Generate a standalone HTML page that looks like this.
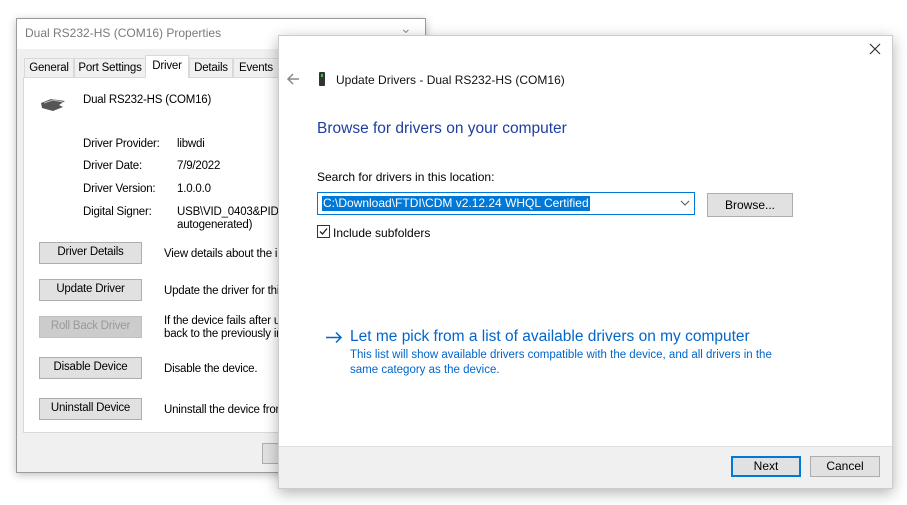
<!DOCTYPE html>
<html><head><style>
*{margin:0;padding:0;box-sizing:border-box}
body{width:907px;height:505px;background:#fff;position:relative;overflow:hidden;font-family:"Liberation Sans",sans-serif;font-size:12px;color:#000}
.a{position:absolute;white-space:nowrap}
.btn{position:absolute;background:#e1e1e1;border:1px solid #adadad;text-align:center;font-size:12px;line-height:19px}
.p{font-size:11.5px;letter-spacing:-0.2px}
</style></head><body>
<div class="a" style="left:16px;top:18px;width:410px;height:455px;background:#f0f0f0;border:1px solid #9a9a9a;box-shadow:0 2px 8px rgba(0,0,0,.25)"></div>
<div class="a" style="left:17px;top:19px;width:408px;height:30px;background:#fff"></div>
<div class="a" style="left:25px;top:26px;font-size:12px;color:#7a7a7a">Dual RS232-HS (COM16) Properties</div>
<div class="a" style="left:400px;top:20px;color:#999;font-size:14px">⌄</div>
<div class="a" style="left:23px;top:77px;width:400px;height:356px;background:#fff;border:1px solid #d9d9d9"></div>
<div class="a p" style="left:24px;top:58px;width:50px;height:20px;background:#f0f0f0;border:1px solid #d9d9d9;text-align:center;line-height:18px">General</div>
<div class="a p" style="left:74px;top:58px;width:72px;height:20px;background:#f0f0f0;border:1px solid #d9d9d9;text-align:center;line-height:18px">Port Settings</div>
<div class="a p" style="left:145px;top:55px;width:44px;height:23px;background:#fff;border:1px solid #d9d9d9;border-bottom:none;text-align:center;line-height:20px">Driver</div>
<div class="a p" style="left:189px;top:58px;width:44px;height:20px;background:#f0f0f0;border:1px solid #d9d9d9;text-align:center;line-height:18px">Details</div>
<div class="a p" style="left:233px;top:58px;width:46px;height:20px;background:#f0f0f0;border:1px solid #d9d9d9;text-align:center;line-height:18px">Events</div>
<svg class="a" style="left:39px;top:97px" width="30" height="16"><path d="M2 6 L12 2 L26 4 L20 8 L24 10 L14 14 L3 11Z" fill="#555"/><path d="M5 6 L14 3 L24 5" stroke="#bbb" fill="none"/></svg>
<div class="a p" style="left:83px;top:94px">Dual RS232-HS (COM16)</div>
<div class="a p" style="left:83px;top:138px">Driver Provider:</div><div class="a p" style="left:177px;top:138px">libwdi</div>
<div class="a p" style="left:83px;top:160px">Driver Date:</div><div class="a p" style="left:177px;top:160px">7/9/2022</div>
<div class="a p" style="left:83px;top:183px">Driver Version:</div><div class="a p" style="left:177px;top:183px">1.0.0.0</div>
<div class="a p" style="left:83px;top:206px">Digital Signer:</div><div class="a p" style="left:177px;top:206px;line-height:13px">USB\VID_0403&amp;PID_0000<br>autogenerated)</div>
<div class="btn p" style="left:39px;top:242px;width:103px;height:22px">Driver Details</div><div class="a p" style="left:164px;top:248px">View details about the installed</div>
<div class="btn p" style="left:39px;top:279px;width:103px;height:22px">Update Driver</div><div class="a p" style="left:164px;top:285px">Update the driver for this device</div>
<div class="btn p" style="left:39px;top:316px;width:103px;height:22px;background:#ccc;border-color:#bfbfbf;color:#999">Roll Back Driver</div><div class="a p" style="left:164px;top:315px;line-height:13px">If the device fails after updating<br>back to the previously installed</div>
<div class="btn p" style="left:39px;top:357px;width:103px;height:22px">Disable Device</div><div class="a p" style="left:164px;top:363px">Disable the device.</div>
<div class="btn p" style="left:39px;top:398px;width:103px;height:22px">Uninstall Device</div><div class="a p" style="left:164px;top:404px">Uninstall the device from the system</div>
<div class="btn" style="left:262px;top:443px;width:60px;height:21px"></div>
<div class="a" style="left:278px;top:35px;width:615px;height:454px;background:#fff;border:1px solid #ccc;box-shadow:0 4px 14px rgba(0,0,0,.3)"></div>
<div class="a" style="left:279px;top:446px;width:613px;height:42px;background:#f0f0f0;border-top:1px solid #dfdfdf"></div>
<svg class="a" style="left:869px;top:43px" width="12" height="12"><path d="M1 1L11 11M11 1L1 11" stroke="#333" stroke-width="1.2"/></svg>
<svg class="a" style="left:286px;top:73px" width="14" height="12"><path d="M13 6H2M7 1L2 6L7 11" stroke="#888" stroke-width="1.5" fill="none"/></svg>
<div class="a" style="left:319px;top:72px;width:6px;height:14px;background:#333;border-radius:1px"></div>
<div class="a" style="left:321px;top:74px;width:2px;height:3px;background:#3c3"></div>
<div class="a" style="left:336px;top:73px;font-size:12px;color:#111">Update Drivers - Dual RS232-HS (COM16)</div>
<div class="a" style="left:317px;top:120px;font-size:15.5px;color:#1e3ea0">Browse for drivers on your computer</div>
<div class="a" style="left:317px;top:170px;font-size:12px">Search for drivers in this location:</div>
<div class="a" style="left:317px;top:192px;width:378px;height:23px;border:1px solid #0078d7;background:#fff"></div>
<div class="a" style="left:322px;top:196px;height:15px;background:#0078d7;color:#fff;font-size:12px;line-height:15px;padding:0 1px">C:\Download\FTDI\CDM v2.12.24 WHQL Certified</div>
<svg class="a" style="left:680px;top:200px" width="10" height="6"><path d="M1 1L5 5L9 1" stroke="#555" fill="none"/></svg>
<div class="btn" style="left:707px;top:193px;width:86px;height:24px;line-height:22px">Browse...</div>
<div class="a" style="left:317px;top:225px;width:13px;height:13px;border:1px solid #333;background:#fff"></div>
<svg class="a" style="left:318px;top:226px" width="11" height="11"><path d="M2 5.5L4.5 8L9 2.5" stroke="#222" stroke-width="1.3" fill="none"/></svg>
<div class="a" style="left:333px;top:226px;font-size:12px">Include subfolders</div>
<svg class="a" style="left:325px;top:331px" width="18" height="13"><path d="M1 6.5H16M11 1.5L16 6.5L11 11.5" stroke="#0066cc" stroke-width="1.5" fill="none"/></svg>
<div class="a" style="left:350px;top:328px;font-size:15.5px;color:#0066cc">Let me pick from a list of available drivers on my computer</div>
<div class="a" style="left:350px;top:348px;font-size:11.5px;color:#0066cc;line-height:15px">This list will show available drivers compatible with the device, and all drivers in the<br>same category as the device.</div>
<div class="btn" style="left:731px;top:456px;width:70px;height:21px;border:2px solid #0078d7;line-height:17px">Next</div>
<div class="btn" style="left:810px;top:456px;width:70px;height:21px">Cancel</div>
</body></html>
